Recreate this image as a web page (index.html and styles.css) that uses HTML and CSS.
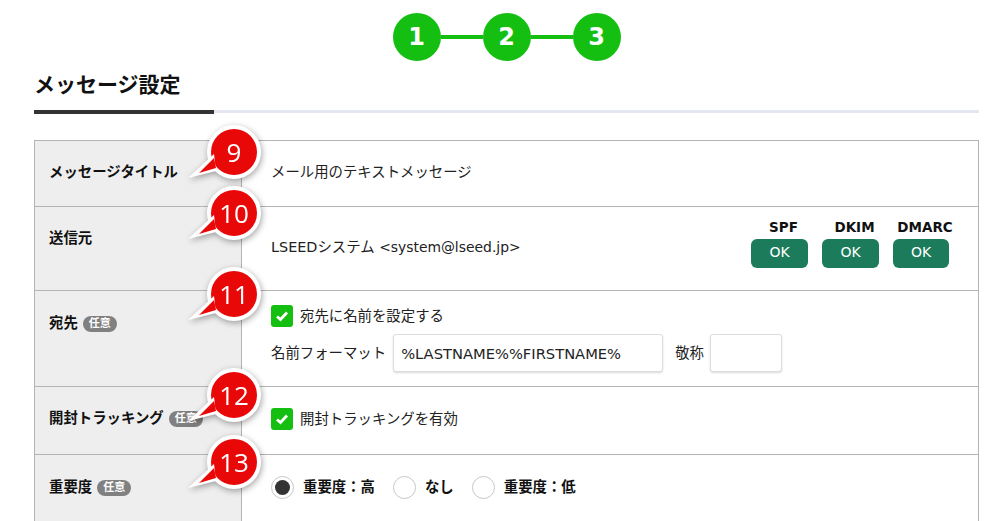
FILE: index.html
```html
<!DOCTYPE html>
<html lang="ja">

<head>
  <meta charset="UTF-8">
  <meta name="viewport" content="width=device-width, initial-scale=1.0">
  <title>メッセージ設定</title>
  <link rel="stylesheet" href="styles.css">
</head>

<body>
  <!-- ステップ -->
  <div class="steps">
    <div class="step">1</div>
    <div class="step-line"></div>
    <div class="step">2</div>
    <div class="step-line"></div>
    <div class="step">3</div>
  </div>

  <h1 class="page-title">メッセージ設定</h1>

  <div class="form-table">
    <div class="row row-title">
      <div class="label">メッセージタイトル</div>
      <div class="value">メール用のテキストメッセージ</div>
    </div>

    <div class="row row-from">
      <div class="label">送信元</div>
      <div class="value value-from">
        <span class="from-text">LSEEDシステム <span class="from-addr">&lt;system@lseed.jp&gt;</span></span>
        <div class="auth-grid">
          <div class="auth-label">SPF</div>
          <div class="auth-label">DKIM</div>
          <div class="auth-label">DMARC</div>
          <div class="auth-btn">OK</div>
          <div class="auth-btn">OK</div>
          <div class="auth-btn">OK</div>
        </div>
      </div>
    </div>

    <div class="row row-to">
      <div class="label">宛先<span class="badge">任意</span></div>
      <div class="value">
        <div class="check-line">
          <span class="check">
            <svg width="14" height="12" viewBox="0 0 14 12"><path d="M2 6.5 5.5 9.5 12 2.5" fill="none" stroke="#fff" stroke-width="2.8"/></svg>
          </span>
          宛先に名前を設定する
        </div>
        <div class="name-line">
          <span>名前フォーマット</span>
          <input class="text-input input-format" type="text" value="%LASTNAME%%FIRSTNAME%">
          <span class="honor-label">敬称</span>
          <input class="text-input input-honor" type="text">
        </div>
      </div>
    </div>

    <div class="row row-track">
      <div class="label">開封トラッキング<span class="badge">任意</span></div>
      <div class="value">
        <div class="check-line">
          <span class="check">
            <svg width="14" height="12" viewBox="0 0 14 12"><path d="M2 6.5 5.5 9.5 12 2.5" fill="none" stroke="#fff" stroke-width="2.8"/></svg>
          </span>
          開封トラッキングを有効
        </div>
      </div>
    </div>

    <div class="row row-priority">
      <div class="label">重要度<span class="badge">任意</span></div>
      <div class="value radio-line">
        <span class="radio radio-on"></span><b class="radio-text">重要度：高</b>
        <span class="radio"></span><b class="radio-text">なし</b>
        <span class="radio"></span><b class="radio-text">重要度：低</b>
      </div>
    </div>

    <!-- 吹き出し番号 -->
    <div class="callout callout-9"><svg class="tail" width="30" height="26" viewBox="0 0 30 26"><path d="M26 1 0 25 28 18Z" fill="#fff"/><path d="M26 5 11 20 28 15Z" fill="#e90808"/></svg><span class="callout-num">9</span></div>
    <div class="callout callout-10"><svg class="tail" width="30" height="26" viewBox="0 0 30 26"><path d="M26 1 0 25 28 18Z" fill="#fff"/><path d="M26 5 11 20 28 15Z" fill="#e90808"/></svg><span class="callout-num">10</span></div>
    <div class="callout callout-11"><svg class="tail" width="30" height="26" viewBox="0 0 30 26"><path d="M26 1 0 25 28 18Z" fill="#fff"/><path d="M26 5 11 20 28 15Z" fill="#e90808"/></svg><span class="callout-num">11</span></div>
    <div class="callout callout-12"><svg class="tail" width="30" height="26" viewBox="0 0 30 26"><path d="M26 1 0 25 28 18Z" fill="#fff"/><path d="M26 5 11 20 28 15Z" fill="#e90808"/></svg><span class="callout-num">12</span></div>
    <div class="callout callout-13"><svg class="tail" width="30" height="26" viewBox="0 0 30 26"><path d="M26 1 0 25 28 18Z" fill="#fff"/><path d="M26 5 11 20 28 15Z" fill="#e90808"/></svg><span class="callout-num">13</span></div>
  </div>
</body>

</html>
```

FILE: styles.css
```css
html,
body {
  height: 521px;
  overflow: hidden;
}

body {
  margin: 0;
  padding: 13px 29px 0 34px;
  background: white;
  color: #111;
  font-family: "DejaVu Sans", "Noto Sans CJK JP", sans-serif;
  font-size: 14.4px;
}

/* ステップ */
.steps {
  display: flex;
  align-items: center;
  justify-content: center;
}

.step {
  width: 48px;
  height: 48px;
  border-radius: 50%;
  background: #14bf12;
  color: white;
  font-size: 24px;
  font-weight: bold;
  line-height: 48px;
  text-align: center;
}

.step-line {
  width: 42px;
  height: 4px;
  background: #14bf12;
}

/* 見出し */
.page-title {
  margin: 9px 0 0;
  height: 40px;
  border-bottom: 3px solid #e4e6f2;
  font-size: 21px;
  font-weight: bold;
  line-height: 30px;
  position: relative;
}

.page-title::after {
  content: "";
  position: absolute;
  left: 0;
  bottom: -4px;
  width: 180px;
  height: 4px;
  background: #333;
}

/* テーブル */
.form-table {
  position: relative;
  margin-top: 27px;
  border: 1px solid #b4b4b4;
  border-bottom: none;
  height: 400px;
}

.row {
  display: grid;
  grid-template-columns: 207px 1fr;
  border-bottom: 1px solid #b4b4b4;
}

.row-title {
  height: 65px;
}

.row-from {
  height: 83px;
}

.row-to {
  height: 95px;
}

.row-track {
  height: 67px;
}

.row-priority {
  height: 80px;
  border-bottom: none;
}

.label {
  display: flex;
  align-items: flex-start;
  padding: 21px 0 0 14px;
  background: #eeeeee;
  border-right: 1px solid #b4b4b4;
  font-weight: bold;
  line-height: 20px;
}

.row-to .label {
  padding-top: 22px;
}

.row-priority .label {
  padding-top: 22px;
}

.value {
  padding: 21px 0 0 29px;
  line-height: 20px;
  color: #222;
}

.badge {
  margin: 3px 0 0 5px;
  width: 34px;
  height: 16px;
  border-radius: 8px;
  background: #808080;
  color: white;
  font-size: 11px;
  line-height: 15px;
  text-align: center;
}

/* 送信元 */
.value-from {
  display: flex;
  justify-content: space-between;
  padding-top: 0;
  padding-right: 29px;
}

.from-text {
  margin-top: 30px;
}

.from-addr {
  font-size: 13.9px;
}

.auth-grid {
  display: grid;
  grid-template-columns: 57px 57px 56px;
  column-gap: 14px;
  row-gap: 3px;
  padding-top: 12px;
  align-content: start;
  color: #111;
}

.auth-label {
  margin: 0 -10px 0 -2px;
  font-size: 13.5px;
  font-weight: bold;
  line-height: 17px;
  text-align: center;
}

.auth-btn {
  height: 29px;
  border-radius: 6px;
  background: #1b7b5a;
  color: white;
  font-size: 14px;
  line-height: 27px;
  text-align: center;
}

/* チェック・入力 */
.check-line {
  display: flex;
  align-items: center;
  gap: 7px;
  height: 22px;
}

.row-to .value {
  padding-top: 14px;
}

.row-track .value {
  padding-top: 21px;
}

.check {
  display: flex;
  align-items: center;
  justify-content: center;
  width: 22px;
  height: 22px;
  border-radius: 3px;
  background: #14bf12;
}

.name-line {
  display: flex;
  align-items: center;
  margin-top: 7px;
}

.text-input {
  box-sizing: border-box;
  height: 38px;
  padding: 0 7px;
  border: 1px solid #dddddd;
  border-radius: 3px;
  box-shadow: 0 1px 2px rgba(0, 0, 0, 0.15);
  color: #222;
  font: inherit;
  font-size: 14.7px;
}

.input-format {
  width: 270px;
  margin-left: 7px;
}

.honor-label {
  margin: 0 6px 0 12px;
}

.input-honor {
  width: 72px;
}

/* ラジオ */
.radio-line {
  display: flex;
  align-items: center;
  height: 22px;
  padding-top: 21px;
}

.radio {
  position: relative;
  box-sizing: border-box;
  width: 23px;
  height: 23px;
  border: 1px solid #c8c8c8;
  border-radius: 50%;
  background: white;
}

.radio-on::after {
  content: "";
  position: absolute;
  left: 3px;
  top: 3px;
  width: 15px;
  height: 15px;
  border-radius: 50%;
  background: #333;
}

.radio-text {
  margin: 0 18px 0 9px;
  color: #111;
}

/* 吹き出し番号 */
.callout {
  position: absolute;
  left: 172px;
  width: 46px;
  height: 46px;
  border: 4px solid white;
  border-radius: 50%;
  background: #e90808;
  filter: drop-shadow(1px 2px 3px rgba(0, 0, 0, 0.35));
}

.callout-9 {
  top: -16px;
}

.callout-10 {
  top: 45px;
}

.callout-11 {
  top: 126px;
}

.callout-12 {
  top: 227px;
}

.callout-13 {
  top: 294px;
}

.tail {
  position: absolute;
  left: -23px;
  top: 24px;
}

.callout-num {
  position: absolute;
  inset: 0;
  color: white;
  font-family: "Open Sans", sans-serif;
  font-size: 26px;
  line-height: 46px;
  text-align: center;
}
```
